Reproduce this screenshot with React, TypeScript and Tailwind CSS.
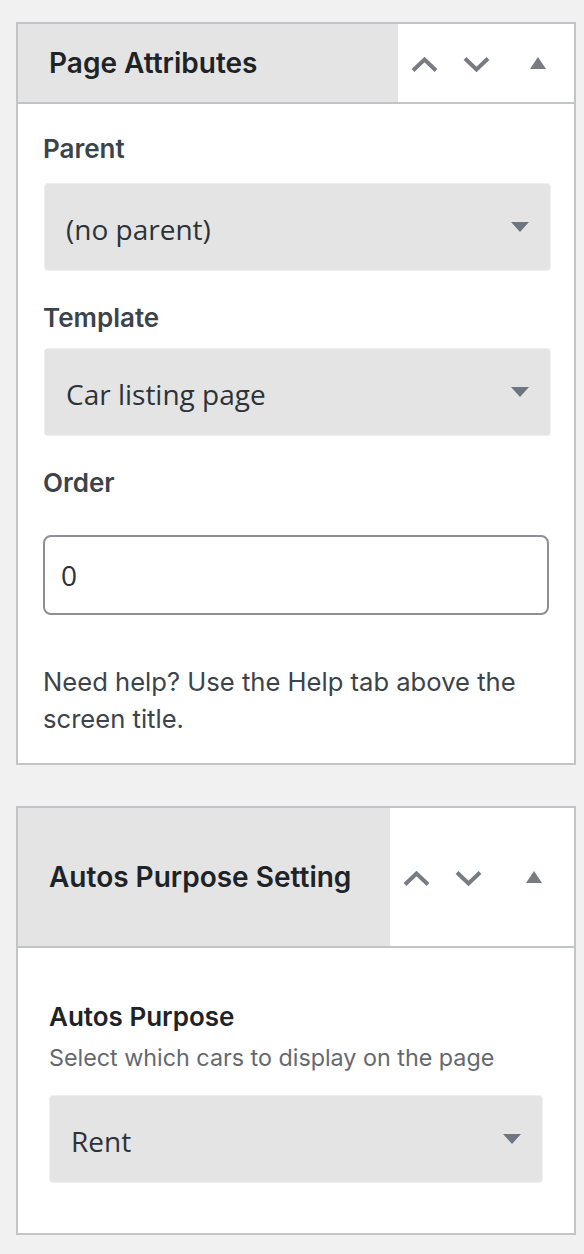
import React from "react";

const ui = { fontFamily: "Inter, 'Noto Sans', sans-serif" };
const sel = { fontFamily: "'Open Sans', 'Noto Sans', sans-serif" };

function ChevUp() {
  return (
    <svg width="27" height="15" viewBox="0 0 27 15">
      <polyline points="2,13.5 13.5,2.5 25,13.5" fill="none" stroke="#787c82" strokeWidth="4" />
    </svg>
  );
}
function ChevDown() {
  return (
    <svg width="27" height="15" viewBox="0 0 27 15">
      <polyline points="2,1.5 13.5,12.5 25,1.5" fill="none" stroke="#787c82" strokeWidth="4" />
    </svg>
  );
}
function Tri() {
  return (
    <svg width="16" height="12" viewBox="0 0 16 12">
      <polygon points="8,0 16,12 0,12" fill="#787c82" />
    </svg>
  );
}
function SelArrow() {
  return (
    <svg width="18" height="10" viewBox="0 0 18 10">
      <polygon points="0,0 18,0 9,10" fill="#6c7781" />
    </svg>
  );
}

function Header({ title, h, actionsW, triW }: { title: string; h: string; actionsW: string; triW: string }) {
  return (
    <div className={`flex ${h} border-b-2 border-[#c3c4c7]`}>
      <div className="flex-1 bg-[#e4e4e4] flex items-center pl-[31px]">
        <h2 className="text-[28px] font-semibold text-[#1d2327] leading-[36px]" style={ui}>{title}</h2>
      </div>
      <div className={`${actionsW} bg-white flex items-center`}>
        <div className="w-[52px] flex justify-center pt-[2px]"><ChevUp /></div>
        <div className="w-[52px] flex justify-center pt-[2px]"><ChevDown /></div>
        <div className={`${triW} flex justify-center`}><Tri /></div>
      </div>
    </div>
  );
}

function Select({ value, pad }: { value: string; pad: string }) {
  return (
    <div className={`h-[88px] bg-[#e4e4e4] border border-[#efefef] rounded-[4px] flex items-center justify-between ${pad} pr-[21px]`}>
      <span className="text-[28px] text-[#2c3338] leading-[36px] pt-[4px]" style={sel}>{value}</span>
      <SelArrow />
    </div>
  );
}

export default function App() {
  return (
    <div className="min-h-[1254px] bg-[#f1f1f1] pt-[22px] pl-[16px] pr-[8px]" style={ui}>
      <div className="border-2 border-[#c3c4c7] bg-white">
        <Header title="Page Attributes" h="h-[80px]" actionsW="w-[176px]" triW="w-[72px]" />
        <div className="pl-[25px] pr-[23px] pt-[27px] pb-[26px]">
          <div className="text-[26px] font-semibold text-[#3c434a] leading-[36px]">Parent</div>
          <div className="mt-[16px] ml-[1px]">
            <Select value="(no parent)" pad="pl-[21px]" />
          </div>
          <div className="mt-[29px] text-[26px] font-semibold text-[#3c434a] leading-[36px]">Template</div>
          <div className="mt-[12px] ml-[1px]">
            <Select value="Car listing page" pad="pl-[21px]" />
          </div>
          <div className="mt-[29px] text-[26px] font-semibold text-[#3c434a] leading-[36px]">Order</div>
          <div className="mt-[34px] mr-[2px] h-[80px] border-2 border-[#8c8f94] rounded-[8px] flex items-center pl-[16px]">
            <span className="text-[28px] text-[#2c3338]" style={sel}>0</span>
          </div>
          <p className="mt-[48px] text-[25.6px] text-[#3c434a] leading-[37px] pr-[20px]">
            Need help? Use the Help tab above the screen title.
          </p>
        </div>
      </div>

      <div className="mt-[41px] border-2 border-[#c3c4c7] bg-white">
        <Header title="Autos Purpose Setting" h="h-[140px]" actionsW="w-[184px]" triW="w-[80px]" />
        <div className="px-[31px] pt-[51px] pb-[50px]">
          <div className="text-[26px] font-semibold text-[#1d2327] leading-[36px]">Autos Purpose</div>
          <div className="mt-[7px] text-[23.3px] text-[#646970] leading-[32px]">Select which cars to display on the page</div>
          <div className="mt-[21px]">
            <Select value="Rent" pad="pl-[21px]" />
          </div>
        </div>
      </div>
    </div>
  );
}
